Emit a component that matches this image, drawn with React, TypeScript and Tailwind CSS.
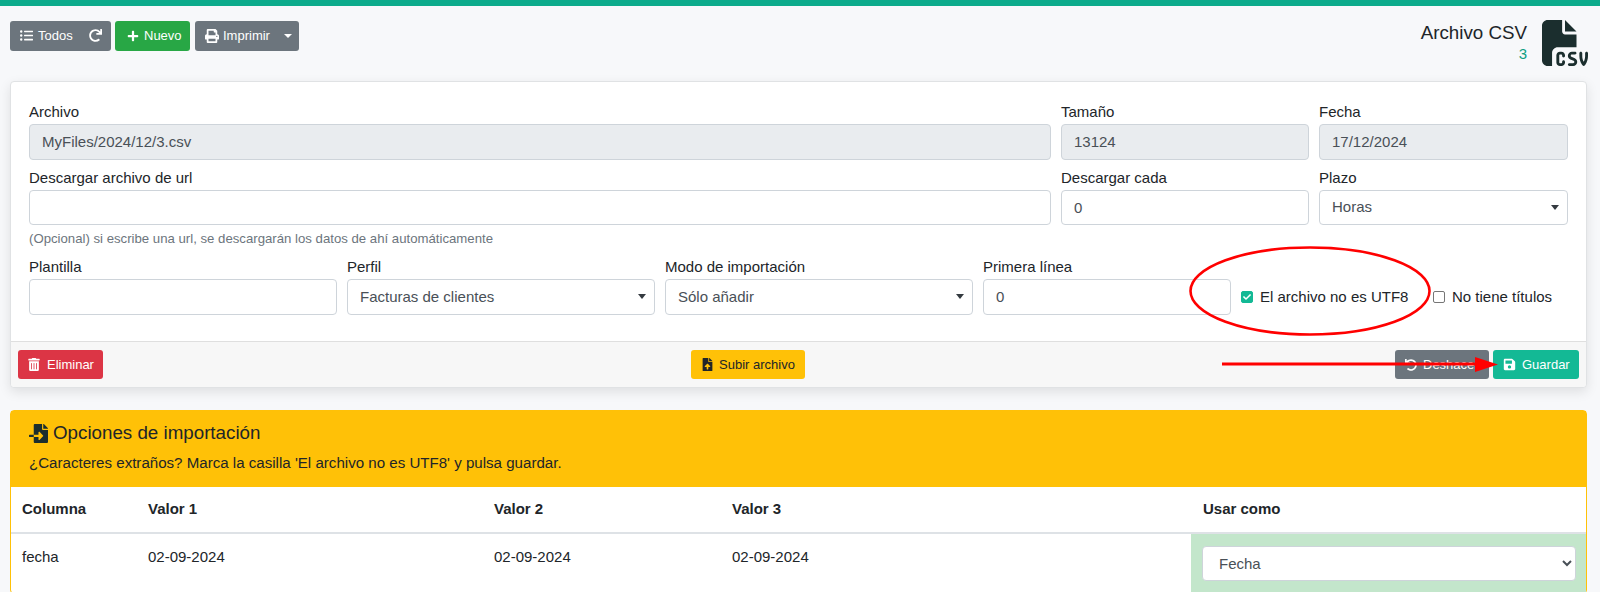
import type { ReactNode } from "react";
import {
  FaListUl,
  FaRedo,
  FaPlus,
  FaPrint,
  FaTrashAlt,
  FaUndo,
  FaSave,
  FaFileUpload,
  FaFileImport,
  FaCheck,
} from "react-icons/fa";
import { FaFileCsv } from "react-icons/fa6";

const inputBase =
  "block w-full h-[35.5px] rounded-[4px] border border-[#ced4da] px-3 text-[15px] text-[#495057] outline-none";

function Label({ children }: { children: ReactNode }) {
  return <label className="block h-[24px] leading-[24px] text-[15px] text-[#212529]">{children}</label>;
}

function Field({ label, value, disabled }: { label: string; value?: string; disabled?: boolean }) {
  return (
    <div>
      <Label>{label}</Label>
      <input
        readOnly
        value={value ?? ""}
        className={disabled ? `${inputBase} bg-[#e9ecef]` : `${inputBase} bg-white`}
      />
    </div>
  );
}

function CaretSelect({ label, value }: { label: string; value: string }) {
  return (
    <div>
      <Label>{label}</Label>
      <div className="relative">
        <select defaultValue={value} className={`${inputBase} bg-white appearance-none`}>
          <option>{value}</option>
        </select>
        <span className="absolute right-[9px] top-[15px] border-x-[4px] border-t-[5px] border-x-transparent border-t-[#343a40]" />
      </div>
    </div>
  );
}

function Btn({ className, children }: { className: string; children: ReactNode }) {
  return (
    <button className={`flex items-center h-[29.5px] rounded-[3px] text-[13px] ${className}`}>{children}</button>
  );
}

function Check({ label, checked }: { label: string; checked?: boolean }) {
  return (
    <label className="flex items-center gap-[7px] text-[15px] text-[#212529] whitespace-nowrap">
      <span className="relative flex w-[12px] h-[12px]">
        <input
          type="checkbox"
          defaultChecked={checked}
          className="peer m-0 w-[12px] h-[12px] appearance-none rounded-[2px] border border-[#767676] bg-white checked:border-[#13b995] checked:bg-[#13b995]"
        />
        {checked && <FaCheck className="absolute left-[2px] top-[2px] w-[8px] h-[8px] text-white" />}
      </span>
      {label}
    </label>
  );
}

function Annotations() {
  return (
    <svg className="absolute left-0 top-0 pointer-events-none" width="1600" height="592">
      <ellipse cx="1310" cy="291" rx="119.5" ry="43.5" fill="none" stroke="#f00" strokeWidth="2.6" />
      <path d="M1222 364H1480" stroke="#f00" strokeWidth="2.8" />
      <path d="M1475 357L1498 364.5L1475 372Z" fill="#f00" />
    </svg>
  );
}

export default function App() {
  return (
    <div
      className="relative h-[592px] overflow-hidden bg-[#f7f8fa] text-[#212529]"
      style={{ fontFamily: '"Liberation Sans", Arial, sans-serif' }}
    >
      <div className="h-[6px] bg-[#0cab8b]" />

      {/* toolbar */}
      <div className="flex justify-between pl-[10px] pr-[12px] h-[75px]">
        <div className="flex gap-[4px] pt-[15px] text-white">
          <Btn className="w-[101px] bg-[#6c757d] pl-[10px]">
            <FaListUl className="w-[13px] h-[13px]" />
            <span className="ml-[5px]">Todos</span>
            <FaRedo className="ml-[16px] w-[13px] h-[13px]" />
          </Btn>
          <Btn className="w-[75px] bg-[#28a745] pl-[12px]">
            <FaPlus className="w-[12px] h-[12px]" />
            <span className="ml-[5px]">Nuevo</span>
          </Btn>
          <Btn className="w-[104px] ml-[1px] bg-[#6c757d] pl-[10px]">
            <FaPrint className="w-[14px] h-[14px]" />
            <span className="ml-[4px]">Imprimir</span>
            <span className="ml-[14px] border-x-[4px] border-t-[4px] border-x-transparent border-t-white" />
          </Btn>
        </div>
        <div className="flex gap-[15px] pt-[14px]">
          <div className="text-right">
            <h1 className="text-[18.75px] leading-[22px] pt-[2px] text-[#212529]">Archivo CSV</h1>
            <div className="text-[15px] leading-[18px] mt-[1px] text-[#0e9f83]">3</div>
          </div>
          <FaFileCsv className="w-[46px] h-[46px] text-[#1b2e2e]" />
        </div>
      </div>

      {/* form card */}
      <div className="mx-[10px] w-[1577px] rounded-[4px] border border-[#e0e2e4] bg-white shadow-[0_4px_12px_rgba(0,0,0,0.1)]">
        <div className="pl-[18px] pt-[18px] h-[259px]">
          <div className="grid grid-cols-[1022px_248px_249px] gap-x-[10px]">
            <Field label="Archivo" value="MyFiles/2024/12/3.csv" disabled />
            <Field label="Tamaño" value="13124" disabled />
            <Field label="Fecha" value="17/12/2024" disabled />
          </div>
          <div className="grid grid-cols-[1022px_248px_249px] gap-x-[10px] mt-[6px]">
            <Field label="Descargar archivo de url" />
            <Field label="Descargar cada" value="0" />
            <CaretSelect label="Plazo" value="Horas" />
          </div>
          <p className="mt-[5px] text-[13.2px] leading-[18px] text-[#6c757d]">
            (Opcional) si escribe una url, se descargarán los datos de ahí automáticamente
          </p>
          <div className="grid grid-cols-[308px_308px_308px_248px_182px_auto] gap-x-[10px] mt-[7px]">
            <Field label="Plantilla" />
            <CaretSelect label="Perfil" value="Facturas de clientes" />
            <CaretSelect label="Modo de importación" value="Sólo añadir" />
            <Field label="Primera línea" value="0" />
            <div className="pt-[24px] flex items-center">
              <Check label="El archivo no es UTF8" checked />
            </div>
            <div className="pt-[24px] flex items-center">
              <Check label="No tiene títulos" />
            </div>
          </div>
        </div>
        <div className="flex items-center justify-between h-[46px] px-[7px] border-t border-[#dfdfdf] bg-[#f7f7f7] rounded-b-[4px]">
          <Btn className="w-[85px] bg-[#dc3545] text-white pl-[10px]">
            <FaTrashAlt className="w-[12px] h-[13px]" />
            <span className="ml-[7px]">Eliminar</span>
          </Btn>
          <Btn className="w-[114px] -ml-[2px] bg-[#ffc107] text-[#212529] pl-[11px]">
            <FaFileUpload className="w-[11px] h-[13px]" />
            <span className="ml-[6px]">Subir archivo</span>
          </Btn>
          <div className="flex gap-[4px] text-white">
            <Btn className="w-[94px] bg-[#6c757d] pl-[10px]">
              <FaUndo className="w-[12px] h-[12px]" />
              <span className="ml-[6px]">Deshacer</span>
            </Btn>
            <Btn className="w-[86px] bg-[#13b995] pl-[10px]">
              <FaSave className="w-[13px] h-[13px]" />
              <span className="ml-[6px]">Guardar</span>
            </Btn>
          </div>
        </div>
      </div>

      {/* import options */}
      <div className="mx-[10px] mt-[22px] w-[1577px] rounded-[4px] border border-[#ffc107] bg-white">
        <div className="h-[76px] bg-[#ffc107] pl-[18px] pt-[10px]">
          <div className="flex items-center h-[24px] text-[18.75px]">
            <FaFileImport className="w-[19px] h-[19px] text-[#1b2e2e] mr-[5px]" />
            Opciones de importación
          </div>
          <p className="mt-[8px] text-[15.1px] leading-[20px]">
            ¿Caracteres extraños? Marca la casilla 'El archivo no es UTF8' y pulsa guardar.
          </p>
        </div>
        <table className="w-full table-fixed text-[15px]">
          <thead>
            <tr className="h-[46px] border-b-2 border-[#dee2e6] text-left">
              <th className="w-[126px] pl-[11px] font-bold">Columna</th>
              <th className="w-[346px] pl-[11px] font-bold">Valor 1</th>
              <th className="w-[238px] pl-[11px] font-bold">Valor 2</th>
              <th className="w-[470px] pl-[11px] font-bold">Valor 3</th>
              <th className="pl-[12px] font-bold">Usar como</th>
            </tr>
          </thead>
          <tbody>
            <tr className="align-top">
              <td className="pl-[11px] pt-[12px]">fecha</td>
              <td className="pl-[11px] pt-[12px]">02-09-2024</td>
              <td className="pl-[11px] pt-[12px]">02-09-2024</td>
              <td className="pl-[11px] pt-[12px]">02-09-2024</td>
              <td className="bg-[#c3e6cb] pl-[11px] pr-[10px] pt-[12px] pb-[12px]">
                <select defaultValue="Fecha" className="block w-full h-[35px] rounded-[4px] border border-[#ced4da] bg-white pl-[12px] text-[15px] text-[#495057]">
                  <option>Fecha</option>
                </select>
              </td>
            </tr>
          </tbody>
        </table>
      </div>

      <Annotations />
    </div>
  );
}
